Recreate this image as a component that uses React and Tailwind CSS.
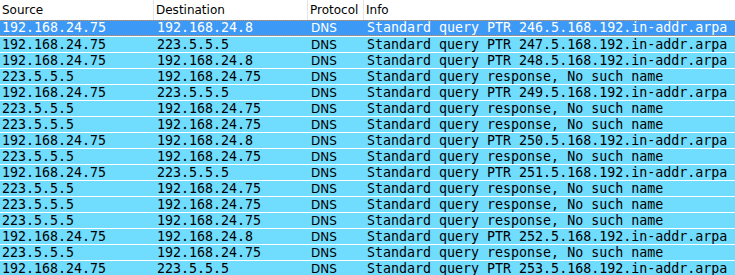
const rows = [
  ["192.168.24.75", "192.168.24.8", "Standard query PTR 246.5.168.192.in-addr.arpa"],
  ["192.168.24.75", "223.5.5.5", "Standard query PTR 247.5.168.192.in-addr.arpa"],
  ["192.168.24.75", "192.168.24.8", "Standard query PTR 248.5.168.192.in-addr.arpa"],
  ["223.5.5.5", "192.168.24.75", "Standard query response, No such name"],
  ["192.168.24.75", "223.5.5.5", "Standard query PTR 249.5.168.192.in-addr.arpa"],
  ["223.5.5.5", "192.168.24.75", "Standard query response, No such name"],
  ["223.5.5.5", "192.168.24.75", "Standard query response, No such name"],
  ["192.168.24.75", "192.168.24.8", "Standard query PTR 250.5.168.192.in-addr.arpa"],
  ["223.5.5.5", "192.168.24.75", "Standard query response, No such name"],
  ["192.168.24.75", "223.5.5.5", "Standard query PTR 251.5.168.192.in-addr.arpa"],
  ["223.5.5.5", "192.168.24.75", "Standard query response, No such name"],
  ["223.5.5.5", "192.168.24.75", "Standard query response, No such name"],
  ["223.5.5.5", "192.168.24.75", "Standard query response, No such name"],
  ["192.168.24.75", "192.168.24.8", "Standard query PTR 252.5.168.192.in-addr.arpa"],
  ["223.5.5.5", "192.168.24.75", "Standard query response, No such name"],
  ["192.168.24.75", "223.5.5.5", "Standard query PTR 253.5.168.192.in-addr.arpa"],
];

export default function App() {
  const sans = { fontFamily: '"DejaVu Sans", Tahoma, sans-serif' };
  const mono = { fontFamily: '"DejaVu Sans Mono", "Liberation Mono", monospace' };
  return (
    <div className="w-[735px] h-[275px] overflow-hidden bg-white">
      <div className="flex h-[20px] items-center bg-white text-[12px] text-black" style={sans}>
        <div className="w-[154px] h-full flex items-center pl-[2px] border-r border-[#e5e5e5]">Source</div>
        <div className="w-[154px] h-full flex items-center pl-[2px] border-r border-[#e5e5e5]">Destination</div>
        <div className="w-[56px] h-full flex items-center pl-[2px] border-r border-[#e5e5e5]">Protocol</div>
        <div className="flex-1 h-full flex items-center pl-[2px]">Info</div>
      </div>
      {rows.map((r, i) => {
        const sel = i === 0;
        return (
          <div
            key={i}
            className={
              sel
                ? "flex h-[16px] items-center bg-[#3d99f6] text-white border-y border-dotted border-[#e8883a]"
                : "flex h-[16px] items-center bg-[#70dcfe] text-black border-t border-white"
            }
          >
            <div className="w-[155px] pl-[2px] text-[13.3px] leading-none whitespace-nowrap" style={mono}>{r[0]}</div>
            <div className="w-[154px] pl-[2px] text-[13.3px] leading-none whitespace-nowrap" style={mono}>{r[1]}</div>
            <div className="w-[56px] pl-[2px] text-[12px] leading-none" style={sans}>DNS</div>
            <div className="flex-1 pl-[2px] text-[13.3px] leading-none whitespace-nowrap" style={mono}>{r[2]}</div>
          </div>
        );
      })}
    </div>
  );
}
